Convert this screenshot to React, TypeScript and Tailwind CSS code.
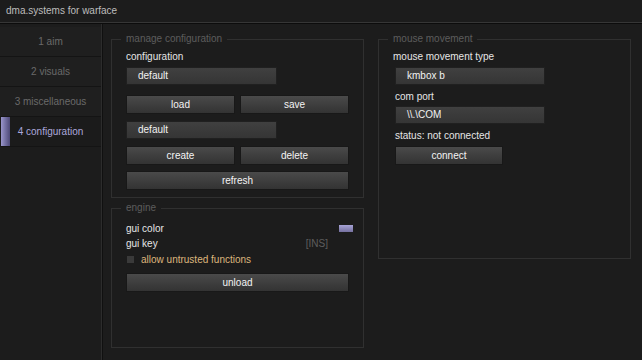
const font = { fontFamily: '"Liberation Sans", Arial, sans-serif' };

function Tab({ label, active }: { label: string; active?: boolean }) {
  return (
    <div
      className={
        "relative flex h-[30px] items-center justify-center border-b border-[#141414] " +
        (active ? "bg-[#1b1b1b] text-[#aca8dc]" : "bg-[#1f1f1f] text-[#6a6a6a]")
      }
    >
      {active && (
        <div className="absolute left-[1px] top-0 h-full w-[9px] bg-gradient-to-r from-[#9a96cc] to-[#4e4a78]" />
      )}
      {label}
    </div>
  );
}

function Field({ value, className = "" }: { value: string; className?: string }) {
  return (
    <div
      className={
        "flex h-[18px] items-center border border-[#202020] bg-gradient-to-b from-[#404040] to-[#353535] pl-[11px] text-[#f2f2f2] " +
        className
      }
    >
      {value}
    </div>
  );
}

function Btn({ label, className = "" }: { label: string; className?: string }) {
  return (
    <div
      className={
        "flex h-[19px] items-center justify-center border border-[#181818] bg-gradient-to-b from-[#4a4a4a] to-[#333333] text-[#f4f4f4] " +
        className
      }
    >
      {label}
    </div>
  );
}

function Group({
  title,
  className = "",
  children,
}: {
  title: string;
  className?: string;
  children: React.ReactNode;
}) {
  return (
    <fieldset className={"border border-[#303030] pl-[14px] pr-[13px] " + className}>
      <legend className="-ml-[5px] px-[5px] leading-[12px] text-[#5c5c5c]">{title}</legend>
      {children}
    </fieldset>
  );
}

export default function App() {
  return (
    <div
      className="flex h-[360px] w-[642px] flex-col overflow-hidden bg-[#1c1c1c] text-[10px] leading-[12px]"
      style={font}
    >
      {/* title */}
      <div className="flex h-[23px] shrink-0 items-center border-b border-[#363636] pl-[6px] text-[#bdbdbd]">
        dma.systems for warface
      </div>

      <div className="flex flex-1 border-t border-[#0c0c0c]">
        {/* sidebar */}
        <div className="w-[102px] shrink-0 border-r border-[#2c2c2c] pt-[3px]">
          <Tab label="1  aim" />
          <Tab label="2  visuals" />
          <Tab label="3  miscellaneous" />
          <Tab label="4  configuration" active />
        </div>

        {/* content */}
        <div className="flex flex-1 gap-[14px] border-l border-[#101010] pl-[8px] pt-[9px]">
          <div className="flex w-[253px] flex-col gap-[4px]">
            <Group title="manage configuration" className="pb-[7px] pt-[6px]">
              <div className="text-[#e6e6e6]">configuration</div>
              <Field value="default" className="mt-[4px] w-[151px]" />
              <div className="mt-[10px] flex gap-[5px]">
                <Btn label="load" className="w-[109px]" />
                <Btn label="save" className="w-[109px]" />
              </div>
              <Field value="default" className="mt-[7px] w-[151px]" />
              <div className="mt-[7px] flex gap-[5px]">
                <Btn label="create" className="w-[109px]" />
                <Btn label="delete" className="w-[109px]" />
              </div>
              <Btn label="refresh" className="mt-[6px] w-[223px]" />
            </Group>

            <Group title="engine" className="h-[146px] pt-[7px]">
              <div className="flex h-[15px] items-center justify-between text-[#e6e6e6]">
                <span>gui color</span>
                <span className="-mr-[3px] h-[7px] w-[14px] bg-gradient-to-b from-[#a7a3d6] to-[#75719f]" />
              </div>
              <div className="flex h-[15px] items-center justify-between text-[#e6e6e6]">
                <span>gui key</span>
                <span className="mr-[22px] text-[#5e5e5e]">[INS]</span>
              </div>
              <div className="flex h-[17px] items-center">
                <span className="ml-[1px] h-[7px] w-[7px] bg-[#3a3a3a]" />
                <span className="ml-[7px] text-[#dcb67c]">allow untrusted functions</span>
              </div>
              <Btn label="unload" className="mt-[5px] w-[223px]" />
            </Group>
          </div>

          <div className="w-[253px]">
            <Group title="mouse movement" className="h-[226px] pl-[13px] pt-[6px]">
              <div className="text-[#e6e6e6]">mouse movement type</div>
              <Field value="kmbox b" className="ml-[2px] mt-[4px] w-[150px]" />
              <div className="ml-[2px] mt-[6px] text-[#e6e6e6]">com port</div>
              <Field value="\\.\COM" className="ml-[2px] mt-[3px] w-[150px]" />
              <div className="ml-[2px] mt-[6px] text-[#e6e6e6]">status: not connected</div>
              <Btn label="connect" className="ml-[2px] mt-[4px] w-[108px]" />
            </Group>
          </div>
        </div>
      </div>
    </div>
  );
}
